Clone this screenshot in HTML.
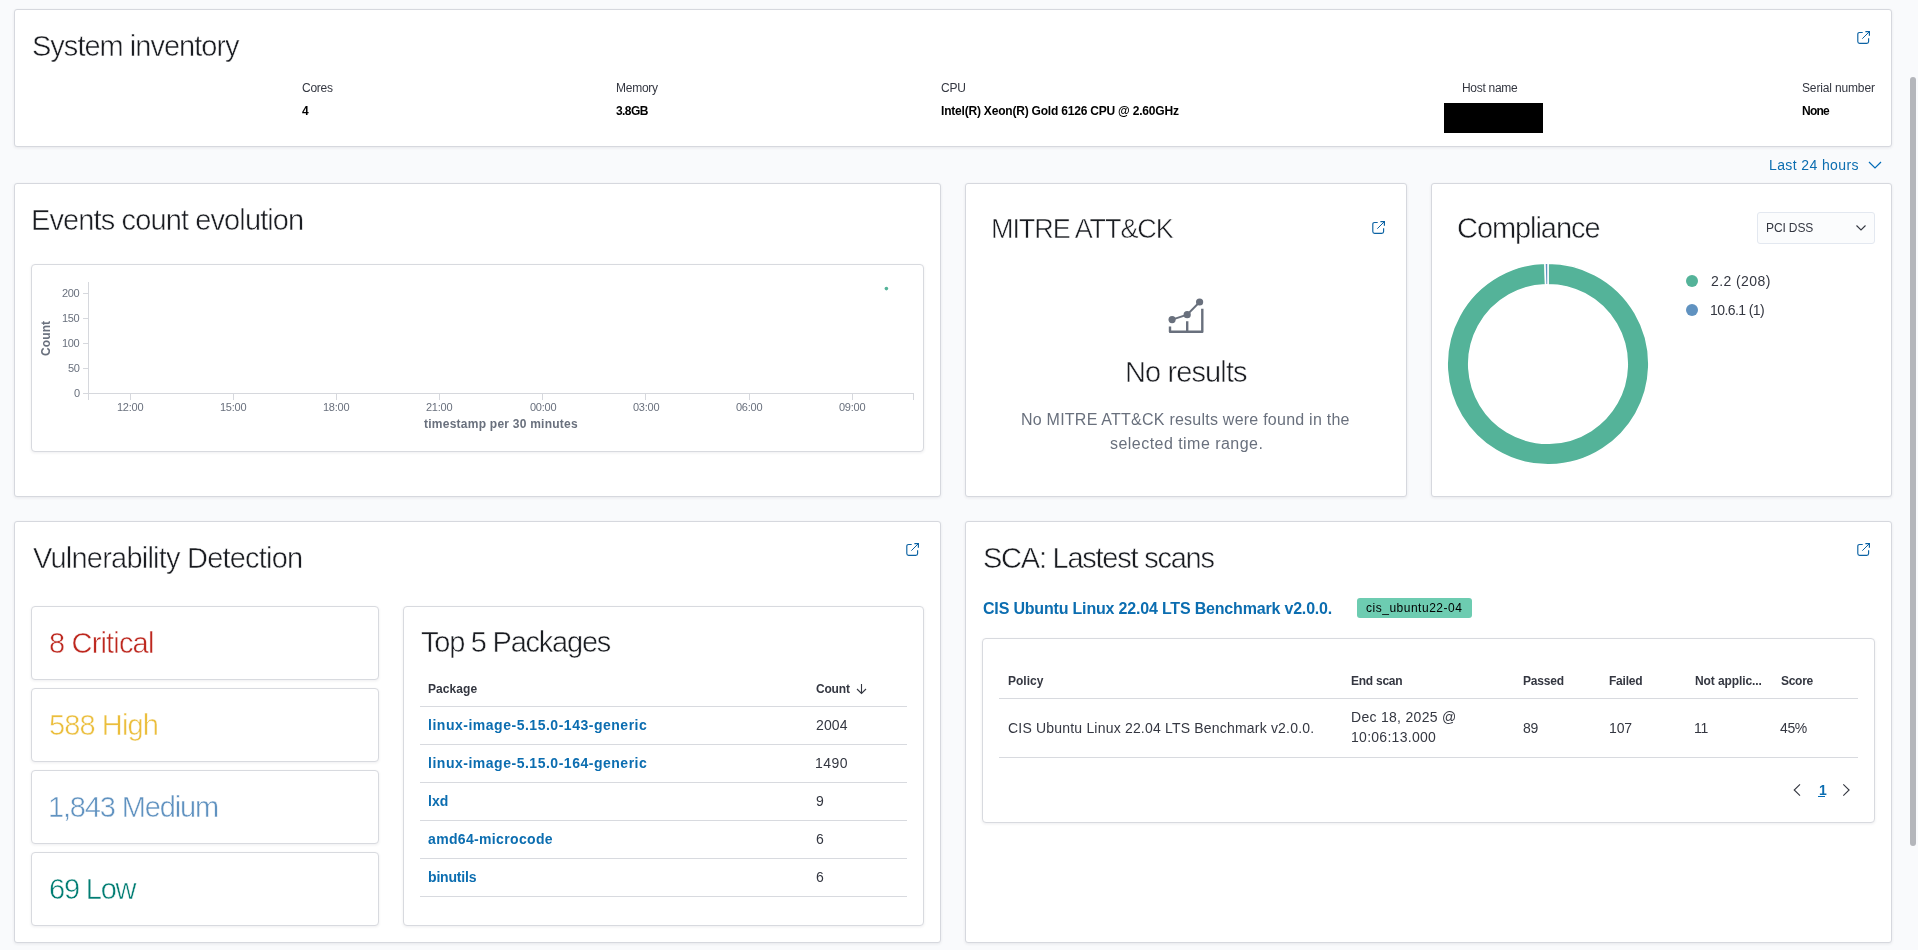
<!DOCTYPE html>
<html><head><meta charset="utf-8"><style>
html,body{margin:0;padding:0;}
body{width:1918px;height:950px;overflow:hidden;background:#F9FAFC;position:relative;font-family:"Liberation Sans", sans-serif;}
.t{position:absolute;white-space:nowrap;will-change:transform;}
.panel{position:absolute;box-sizing:border-box;background:#fff;border:1px solid #D6D8DE;border-radius:3px;box-shadow:0 1px 3px rgba(40,40,70,0.09);}
.sub{position:absolute;box-sizing:border-box;background:#fff;border:1px solid #D8DADF;border-radius:4px;box-shadow:0 1px 3px rgba(40,40,70,0.08);}
.ic{position:absolute;display:block;}
.ln{position:absolute;background:#D8DADF;height:1px;}
</style></head><body>
<div class="panel" style="left:14px;top:9px;width:1878px;height:138px;"></div>
<svg class="ic" style="left:1857px;top:31px" width="13" height="13" viewBox="0 0 13 13"><path d="M5.7 1.5H2.6Q0.8 1.5 0.8 3.3V10.5Q0.8 12.3 2.6 12.3H9.8Q11.6 12.3 11.6 10.5V7.2" fill="none" stroke="#0B62A3" stroke-width="1.15"/><path d="M8.4 0.6H12.4V4.7" fill="none" stroke="#0B62A3" stroke-width="1.2"/><path d="M12.2 0.8L5.3 7.7" fill="none" stroke="#0B62A3" stroke-width="1"/></svg>
<div style="position:absolute;left:1444px;top:103px;width:99px;height:30px;background:#000"></div>
<svg class="ic" style="left:1868px;top:160px" width="14" height="10" viewBox="0 0 14 10"><path d="M1 2L7 8L13 2" fill="none" stroke="#006BB8" stroke-width="1.2"/></svg>
<div class="panel" style="left:14px;top:183px;width:927px;height:314px;"></div>
<div class="sub" style="left:31px;top:264px;width:893px;height:188px;"></div>
<svg class="ic" style="left:0;top:0" width="940" height="496"><line x1="88.5" y1="282" x2="88.5" y2="400" stroke="#D6D8DD" stroke-width="1"/><line x1="88" y1="393.5" x2="914" y2="393.5" stroke="#D6D8DD" stroke-width="1"/><line x1="83" y1="293.5" x2="88" y2="293.5" stroke="#D6D8DD" stroke-width="1"/><line x1="83" y1="318.5" x2="88" y2="318.5" stroke="#D6D8DD" stroke-width="1"/><line x1="83" y1="343.5" x2="88" y2="343.5" stroke="#D6D8DD" stroke-width="1"/><line x1="83" y1="368.5" x2="88" y2="368.5" stroke="#D6D8DD" stroke-width="1"/><line x1="83" y1="393.5" x2="88" y2="393.5" stroke="#D6D8DD" stroke-width="1"/><line x1="130.5" y1="393" x2="130.5" y2="400" stroke="#D6D8DD" stroke-width="1"/><line x1="233.5" y1="393" x2="233.5" y2="400" stroke="#D6D8DD" stroke-width="1"/><line x1="336.5" y1="393" x2="336.5" y2="400" stroke="#D6D8DD" stroke-width="1"/><line x1="439.5" y1="393" x2="439.5" y2="400" stroke="#D6D8DD" stroke-width="1"/><line x1="542.5" y1="393" x2="542.5" y2="400" stroke="#D6D8DD" stroke-width="1"/><line x1="645.5" y1="393" x2="645.5" y2="400" stroke="#D6D8DD" stroke-width="1"/><line x1="749.5" y1="393" x2="749.5" y2="400" stroke="#D6D8DD" stroke-width="1"/><line x1="852.5" y1="393" x2="852.5" y2="400" stroke="#D6D8DD" stroke-width="1"/><line x1="913.5" y1="393" x2="913.5" y2="400" stroke="#D6D8DD" stroke-width="1"/><circle cx="886.4" cy="288.6" r="1.8" fill="#54B399"/></svg>
<div class="panel" style="left:965px;top:183px;width:442px;height:314px;"></div>
<svg class="ic" style="left:1372px;top:221px" width="13" height="13" viewBox="0 0 13 13"><path d="M5.7 1.5H2.6Q0.8 1.5 0.8 3.3V10.5Q0.8 12.3 2.6 12.3H9.8Q11.6 12.3 11.6 10.5V7.2" fill="none" stroke="#0B62A3" stroke-width="1.15"/><path d="M8.4 0.6H12.4V4.7" fill="none" stroke="#0B62A3" stroke-width="1.2"/><path d="M12.2 0.8L5.3 7.7" fill="none" stroke="#0B62A3" stroke-width="1"/></svg>
<svg class="ic" style="left:1160px;top:290px" width="50" height="50" viewBox="1160 290 50 50">
<path d="M1170 326.5V331.7H1202.3V308.7M1187.2 321.3V331.7" fill="none" stroke="#69707D" stroke-width="2.4" stroke-linejoin="round"/>
<path d="M1172.1 319.6L1187.2 314.7L1199.6 302" fill="none" stroke="#69707D" stroke-width="2"/>
<circle cx="1172.1" cy="319.6" r="3.6" fill="#69707D"/><circle cx="1187.2" cy="314.7" r="3.6" fill="#69707D"/><circle cx="1199.6" cy="302" r="3.6" fill="#69707D"/>
</svg>
<div class="panel" style="left:1431px;top:183px;width:461px;height:314px;"></div>
<div style="position:absolute;box-sizing:border-box;left:1757px;top:212px;width:118px;height:32px;background:#FBFCFD;border:1px solid #E3E8F0;border-radius:3px;"></div>
<svg class="ic" style="left:1855px;top:223px" width="12" height="9" viewBox="0 0 12 9"><path d="M1.5 2.5L6 7L10.5 2.5" fill="none" stroke="#343741" stroke-width="1.1"/></svg>
<svg class="ic" style="left:0;top:0" width="1918" height="950" viewBox="0 0 1918 950"><path d="M1548.000 263.200A100.8 100.8 0 1 1 1544.970 263.246L1545.616 284.736A79.3 79.3 0 1 0 1548.000 284.700Z" fill="#54B399" stroke="#fff" stroke-width="1.5"/><path d="M1544.970 263.246A100.8 100.8 0 0 1 1547.990 263.200L1547.992 284.700A79.3 79.3 0 0 0 1545.616 284.736Z" fill="#6092C0" stroke="#fff" stroke-width="1.5"/></svg>
<div style="position:absolute;left:1686px;top:275px;width:12px;height:12px;border-radius:50%;background:#54B399"></div>
<div style="position:absolute;left:1686px;top:304px;width:12px;height:12px;border-radius:50%;background:#6092C0"></div>
<div class="panel" style="left:14px;top:521px;width:927px;height:422px;"></div>
<svg class="ic" style="left:906px;top:543px" width="13" height="13" viewBox="0 0 13 13"><path d="M5.7 1.5H2.6Q0.8 1.5 0.8 3.3V10.5Q0.8 12.3 2.6 12.3H9.8Q11.6 12.3 11.6 10.5V7.2" fill="none" stroke="#0B62A3" stroke-width="1.15"/><path d="M8.4 0.6H12.4V4.7" fill="none" stroke="#0B62A3" stroke-width="1.2"/><path d="M12.2 0.8L5.3 7.7" fill="none" stroke="#0B62A3" stroke-width="1"/></svg>
<div class="sub" style="left:31px;top:606px;width:348px;height:74px;"></div>
<div class="sub" style="left:31px;top:688px;width:348px;height:74px;"></div>
<div class="sub" style="left:31px;top:770px;width:348px;height:74px;"></div>
<div class="sub" style="left:31px;top:852px;width:348px;height:74px;"></div>
<div class="sub" style="left:403px;top:606px;width:521px;height:320px;"></div>
<svg class="ic" style="left:855px;top:683px" width="13" height="12" viewBox="0 0 13 12"><path d="M6.5 1V10.5M2 6L6.5 10.5L11 6" fill="none" stroke="#343741" stroke-width="1.1"/></svg>
<div class="ln" style="left:420px;top:706px;width:487px;"></div>
<div class="ln" style="left:420px;top:744px;width:487px;"></div>
<div class="ln" style="left:420px;top:782px;width:487px;"></div>
<div class="ln" style="left:420px;top:820px;width:487px;"></div>
<div class="ln" style="left:420px;top:858px;width:487px;"></div>
<div class="ln" style="left:420px;top:896px;width:487px;"></div>
<div class="panel" style="left:965px;top:521px;width:927px;height:422px;"></div>
<svg class="ic" style="left:1857px;top:543px" width="13" height="13" viewBox="0 0 13 13"><path d="M5.7 1.5H2.6Q0.8 1.5 0.8 3.3V10.5Q0.8 12.3 2.6 12.3H9.8Q11.6 12.3 11.6 10.5V7.2" fill="none" stroke="#0B62A3" stroke-width="1.15"/><path d="M8.4 0.6H12.4V4.7" fill="none" stroke="#0B62A3" stroke-width="1.2"/><path d="M12.2 0.8L5.3 7.7" fill="none" stroke="#0B62A3" stroke-width="1"/></svg>
<div style="position:absolute;left:1357px;top:598px;width:115px;height:20px;background:#6DCCB1;border-radius:3px"></div>
<div class="sub" style="left:982px;top:638px;width:893px;height:185px;"></div>
<div class="ln" style="left:999px;top:698px;width:859px;"></div>
<div class="ln" style="left:999px;top:757px;width:859px;"></div>
<svg class="ic" style="left:1790px;top:782px" width="64" height="16" viewBox="1790 782 64 16"><path d="M1800 784.3L1794.2 790L1800 795.7M1843.3 784.3L1849.1 790L1843.3 795.7" fill="none" stroke="#343741" stroke-width="1.1"/></svg>
<div style="position:absolute;left:1818px;top:796px;width:7px;height:1px;background:#006BB8"></div>
<div style="position:absolute;left:1910px;top:77px;width:6px;height:769px;border-radius:3px;background:#B4B6BB"></div>
<div class="t " style="left:31.50px;top:32.30px;font-size:29px;line-height:29px;font-weight:300;color:#1a1c21;letter-spacing:-0.988px;-webkit-text-stroke:0.5px #fff;">System inventory</div>
<div class="t " style="left:301.60px;top:81.90px;font-size:12px;line-height:12px;font-weight:400;color:#343741;letter-spacing:-0.252px;">Cores</div>
<div class="t " style="left:301.80px;top:104.70px;font-size:12px;line-height:12px;font-weight:700;color:#000;">4</div>
<div class="t " style="left:615.80px;top:81.90px;font-size:12px;line-height:12px;font-weight:400;color:#343741;letter-spacing:-0.247px;">Memory</div>
<div class="t " style="left:616.00px;top:104.70px;font-size:12px;line-height:12px;font-weight:700;color:#000;letter-spacing:-0.579px;">3.8GB</div>
<div class="t " style="left:940.80px;top:81.90px;font-size:12px;line-height:12px;font-weight:400;color:#343741;letter-spacing:-0.235px;">CPU</div>
<div class="t " style="left:940.80px;top:105.00px;font-size:12px;line-height:12px;font-weight:700;color:#000;letter-spacing:-0.201px;">Intel(R) Xeon(R) Gold 6126 CPU @ 2.60GHz</div>
<div class="t " style="left:1462.40px;top:82.00px;font-size:12px;line-height:12px;font-weight:400;color:#343741;letter-spacing:-0.294px;">Host name</div>
<div class="t " style="left:1801.60px;top:81.80px;font-size:12px;line-height:12px;font-weight:400;color:#343741;letter-spacing:-0.150px;">Serial number</div>
<div class="t " style="left:1802.00px;top:104.80px;font-size:12px;line-height:12px;font-weight:700;color:#000;letter-spacing:-0.775px;">None</div>
<div class="t " style="left:1768.80px;top:158.00px;font-size:14px;line-height:14px;font-weight:400;color:#0B6DB0;letter-spacing:0.389px;">Last 24 hours</div>
<div class="t " style="left:31.30px;top:206.20px;font-size:29px;line-height:29px;font-weight:300;color:#1a1c21;letter-spacing:-0.884px;-webkit-text-stroke:0.5px #fff;">Events count evolution</div>
<div class="t " style="left:61.60px;top:288.00px;font-size:11px;line-height:11px;font-weight:400;color:#69707D;letter-spacing:-0.318px;">200</div>
<div class="t " style="left:61.60px;top:313.00px;font-size:11px;line-height:11px;font-weight:400;color:#69707D;letter-spacing:-0.318px;">150</div>
<div class="t " style="left:61.60px;top:338.00px;font-size:11px;line-height:11px;font-weight:400;color:#69707D;letter-spacing:-0.318px;">100</div>
<div class="t " style="left:67.50px;top:363.00px;font-size:11px;line-height:11px;font-weight:400;color:#69707D;letter-spacing:-0.418px;">50</div>
<div class="t " style="left:73.80px;top:388.00px;font-size:11px;line-height:11px;font-weight:400;color:#69707D;">0</div>
<div class="t " style="left:117.10px;top:401.70px;font-size:11px;line-height:11px;font-weight:400;color:#69707D;letter-spacing:-0.252px;">12:00</div>
<div class="t " style="left:220.23px;top:401.70px;font-size:11px;line-height:11px;font-weight:400;color:#69707D;letter-spacing:-0.252px;">15:00</div>
<div class="t " style="left:323.36px;top:401.70px;font-size:11px;line-height:11px;font-weight:400;color:#69707D;letter-spacing:-0.252px;">18:00</div>
<div class="t " style="left:426.49px;top:401.70px;font-size:11px;line-height:11px;font-weight:400;color:#69707D;letter-spacing:-0.252px;">21:00</div>
<div class="t " style="left:529.62px;top:401.70px;font-size:11px;line-height:11px;font-weight:400;color:#69707D;letter-spacing:-0.252px;">00:00</div>
<div class="t " style="left:632.75px;top:401.70px;font-size:11px;line-height:11px;font-weight:400;color:#69707D;letter-spacing:-0.252px;">03:00</div>
<div class="t " style="left:735.88px;top:401.70px;font-size:11px;line-height:11px;font-weight:400;color:#69707D;letter-spacing:-0.252px;">06:00</div>
<div class="t " style="left:839.01px;top:401.70px;font-size:11px;line-height:11px;font-weight:400;color:#69707D;letter-spacing:-0.252px;">09:00</div>
<div class="t " style="left:424.40px;top:417.70px;font-size:12px;line-height:12px;font-weight:700;color:#69707D;letter-spacing:0.245px;">timestamp per 30 minutes</div>
<div class="t " style="left:40.30px;top:355.70px;font-size:12px;line-height:12px;font-weight:700;color:#69707D;letter-spacing:0.111px;transform:rotate(-90deg);transform-origin:0 0;">Count</div>
<div class="t " style="left:990.50px;top:215.80px;font-size:27px;line-height:27px;font-weight:300;color:#1a1c21;letter-spacing:-1.063px;-webkit-text-stroke:0.5px #fff;">MITRE ATT&amp;CK</div>
<div class="t " style="left:1124.80px;top:357.90px;font-size:29px;line-height:29px;font-weight:300;color:#1a1c21;letter-spacing:-0.882px;-webkit-text-stroke:0.5px #fff;">No results</div>
<div class="t " style="left:1020.90px;top:411.80px;font-size:16px;line-height:16px;font-weight:400;color:#69707D;letter-spacing:0.237px;">No MITRE ATT&amp;CK results were found in the</div>
<div class="t " style="left:1110.40px;top:435.50px;font-size:16px;line-height:16px;font-weight:400;color:#69707D;letter-spacing:0.461px;">selected time range.</div>
<div class="t " style="left:1456.60px;top:213.50px;font-size:29px;line-height:29px;font-weight:300;color:#1a1c21;letter-spacing:-1.067px;-webkit-text-stroke:0.5px #fff;">Compliance</div>
<div class="t " style="left:1765.70px;top:222.10px;font-size:12px;line-height:12px;font-weight:400;color:#343741;letter-spacing:-0.118px;">PCI DSS</div>
<div class="t " style="left:1710.70px;top:273.80px;font-size:14px;line-height:14px;font-weight:400;color:#343741;letter-spacing:0.416px;">2.2 (208)</div>
<div class="t " style="left:1710.00px;top:302.90px;font-size:14px;line-height:14px;font-weight:400;color:#343741;letter-spacing:-0.585px;">10.6.1 (1)</div>
<div class="t " style="left:32.50px;top:543.80px;font-size:29px;line-height:29px;font-weight:300;color:#1a1c21;letter-spacing:-0.783px;-webkit-text-stroke:0.5px #fff;">Vulnerability Detection</div>
<div class="t " style="left:48.70px;top:628.50px;font-size:29px;line-height:29px;font-weight:300;color:#BD271E;letter-spacing:-0.829px;-webkit-text-stroke:0.5px #fff;">8 Critical</div>
<div class="t " style="left:48.70px;top:710.50px;font-size:29px;line-height:29px;font-weight:300;color:#EBBE3C;letter-spacing:-0.894px;-webkit-text-stroke:0.5px #fff;">588 High</div>
<div class="t " style="left:47.70px;top:793.00px;font-size:29px;line-height:29px;font-weight:300;color:#6092C0;letter-spacing:-1.156px;-webkit-text-stroke:0.5px #fff;">1,843 Medium</div>
<div class="t " style="left:48.70px;top:874.80px;font-size:29px;line-height:29px;font-weight:300;color:#017D73;letter-spacing:-1.194px;-webkit-text-stroke:0.5px #fff;">69 Low</div>
<div class="t " style="left:421.00px;top:628.30px;font-size:29px;line-height:29px;font-weight:300;color:#1a1c21;letter-spacing:-1.235px;-webkit-text-stroke:0.5px #fff;">Top 5 Packages</div>
<div class="t " style="left:427.70px;top:682.90px;font-size:12px;line-height:12px;font-weight:700;color:#343741;letter-spacing:0.062px;">Package</div>
<div class="t " style="left:815.70px;top:682.80px;font-size:12px;line-height:12px;font-weight:700;color:#343741;letter-spacing:-0.189px;">Count</div>
<div class="t " style="left:427.70px;top:717.50px;font-size:14px;line-height:14px;font-weight:700;color:#0B6DB0;letter-spacing:0.515px;">linux-image-5.15.0-143-generic</div>
<div class="t " style="left:815.70px;top:717.50px;font-size:14px;line-height:14px;font-weight:400;color:#343741;letter-spacing:0.147px;">2004</div>
<div class="t " style="left:427.70px;top:755.50px;font-size:14px;line-height:14px;font-weight:700;color:#0B6DB0;letter-spacing:0.515px;">linux-image-5.15.0-164-generic</div>
<div class="t " style="left:814.70px;top:755.50px;font-size:14px;line-height:14px;font-weight:400;color:#343741;letter-spacing:0.481px;">1490</div>
<div class="t " style="left:427.70px;top:793.50px;font-size:14px;line-height:14px;font-weight:700;color:#0B6DB0;letter-spacing:0.062px;">lxd</div>
<div class="t " style="left:815.70px;top:793.50px;font-size:14px;line-height:14px;font-weight:400;color:#343741;">9</div>
<div class="t " style="left:427.70px;top:831.50px;font-size:14px;line-height:14px;font-weight:700;color:#0B6DB0;letter-spacing:0.340px;">amd64-microcode</div>
<div class="t " style="left:815.70px;top:831.50px;font-size:14px;line-height:14px;font-weight:400;color:#343741;">6</div>
<div class="t " style="left:427.70px;top:869.50px;font-size:14px;line-height:14px;font-weight:700;color:#0B6DB0;letter-spacing:-0.169px;">binutils</div>
<div class="t " style="left:815.70px;top:869.50px;font-size:14px;line-height:14px;font-weight:400;color:#343741;">6</div>
<div class="t " style="left:982.60px;top:543.50px;font-size:29px;line-height:29px;font-weight:300;color:#1a1c21;letter-spacing:-1.244px;-webkit-text-stroke:0.5px #fff;">SCA: Lastest scans</div>
<div class="t " style="left:982.90px;top:601.30px;font-size:16px;line-height:16px;font-weight:700;color:#0B6DB0;letter-spacing:-0.183px;">CIS Ubuntu Linux 22.04 LTS Benchmark v2.0.0.</div>
<div class="t " style="left:1365.80px;top:602.00px;font-size:12px;line-height:12px;font-weight:400;color:#000;letter-spacing:0.510px;">cis_ubuntu22-04</div>
<div class="t " style="left:1007.60px;top:675.00px;font-size:12px;line-height:12px;font-weight:700;color:#343741;">Policy</div>
<div class="t " style="left:1351.10px;top:675.00px;font-size:12px;line-height:12px;font-weight:700;color:#343741;letter-spacing:-0.246px;">End scan</div>
<div class="t " style="left:1523.00px;top:675.00px;font-size:12px;line-height:12px;font-weight:700;color:#343741;letter-spacing:-0.200px;">Passed</div>
<div class="t " style="left:1608.90px;top:675.00px;font-size:12px;line-height:12px;font-weight:700;color:#343741;letter-spacing:-0.209px;">Failed</div>
<div class="t " style="left:1694.80px;top:675.00px;font-size:12px;line-height:12px;font-weight:700;color:#343741;letter-spacing:-0.097px;">Not applic...</div>
<div class="t " style="left:1780.50px;top:675.00px;font-size:12px;line-height:12px;font-weight:700;color:#343741;letter-spacing:-0.294px;">Score</div>
<div class="t " style="left:1007.80px;top:720.60px;font-size:14px;line-height:14px;font-weight:400;color:#343741;letter-spacing:0.193px;">CIS Ubuntu Linux 22.04 LTS Benchmark v2.0.0.</div>
<div class="t " style="left:1350.50px;top:709.70px;font-size:14px;line-height:14px;font-weight:400;color:#343741;letter-spacing:0.294px;">Dec 18, 2025 @</div>
<div class="t " style="left:1351.00px;top:730.40px;font-size:14px;line-height:14px;font-weight:400;color:#343741;letter-spacing:0.277px;">10:06:13.000</div>
<div class="t " style="left:1523.00px;top:720.50px;font-size:14px;line-height:14px;font-weight:400;color:#343741;letter-spacing:-0.186px;">89</div>
<div class="t " style="left:1608.70px;top:720.50px;font-size:14px;line-height:14px;font-weight:400;color:#343741;letter-spacing:-0.136px;">107</div>
<div class="t " style="left:1694.40px;top:720.50px;font-size:14px;line-height:14px;font-weight:400;color:#343741;letter-spacing:-0.147px;">11</div>
<div class="t " style="left:1780.20px;top:720.50px;font-size:14px;line-height:14px;font-weight:400;color:#343741;letter-spacing:-0.386px;">45%</div>
<div class="t " style="left:1818.70px;top:783.00px;font-size:14px;line-height:14px;font-weight:700;color:#0B6DB0;">1</div>
</body></html>
